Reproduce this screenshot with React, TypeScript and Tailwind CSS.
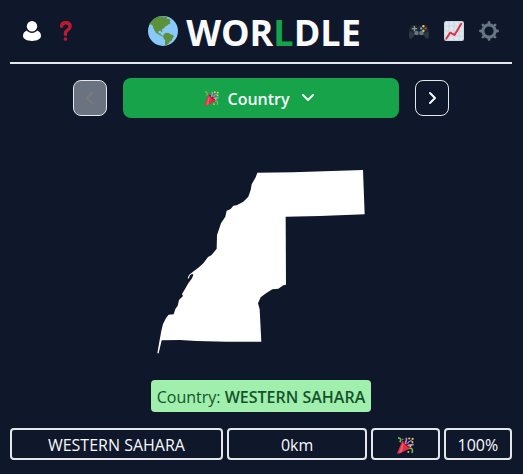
import type { ReactNode } from "react";

function Globe() {
  return (
    <svg viewBox="0 0 36 36" className="size-[30px]" aria-hidden="true">
      <circle cx="18" cy="18" r="18" fill="#88C9F9" />
      <path
        fill="#5C913B"
        d="M3.400 7.600C6 3.600 10 1 14.500 .4l5 .1 3.500 1-.6 1.700 3.200 .2 1.600 2.200-1.200 1.700 1 2.200-2.600 .4-1.200 1.600-2.200 .8-1.400 2.200-2.400 1-.4 2 .6 1.600-1.200 .2-1.200-1.700-2.200 .4-.6 1.700 1 1.400 1.600-.4 .4 1.600 1.600 .8 1.200 1.200-.8 .4-2.200-1.200-2.600-1.500-2.700-1.600-1.600-2.600-1.800-3.200-.4-2.600-2-1.800-3-.3z"
      />
      <path
        fill="#5C913B"
        d="M19.400 21.600l2.200-1.600 3.200 .4 2.400 1.600 3.200 1.200 .6 1.800-1.800 2-.6 2.400-2.200 1.200-1.600 2.400-1.600 1-.8 1.800-1.500 .2-.5-2.800 .2-4-2-2.600-.6-2.400z"
      />
    </svg>
  );
}

function Person() {
  return (
    <svg viewBox="0 0 20 20" className="size-5" fill="#fff" aria-hidden="true">
      <circle cx="10" cy="5.300" r="5.200" />
      <path d="M4.800 9.600C2.500 10.600 1 12.500 1 14.800 1 18 5 20 10 20s9-2 9-5.200c0-2.300-1.500-4.200-3.800-5.200C14 11 12.100 11.900 10 11.900S6 11 4.800 9.600z" />
    </svg>
  );
}

function Question() {
  return (
    <svg viewBox="0 0 36 36" className="size-5" aria-hidden="true">
      <circle cx="17" cy="32.500" r="3.300" fill="#BE1931" />
      <path
        d="M10 9.500C10.300 5.500 13 3.200 17.500 3.200c5 0 8 2.900 8 6.900 0 6.400-8.500 5.400-8.500 12.100v2"
        fill="none"
        stroke="#BE1931"
        strokeWidth="6"
        strokeLinecap="round"
      />
    </svg>
  );
}

function Gamepad() {
  return (
    <svg viewBox="0 0 36 36" className="size-5" aria-hidden="true">
      <path
        fill="#31373D"
        d="M0 26C0 18 2 9 6 7.500c2.500-.8 6-.5 8 1h8c2-1.500 5.500-1.800 8-1 4 1.500 6 10.500 6 18.500 0 4.500-1 6-3 6-3 0-4.500-4-7-7H10c-2.500 3-4 7-7 7-2 0-3-1.500-3-6z"
      />
      <path fill="#212629" d="M6 7.500c2.500-.8 6-.5 8 1h8c2-1.500 5.500-1.800 8-1 3 1.200 4.500 6 5.500 11l-9 3.500h-17l-9-3.500C1.500 13.500 3 8.700 6 7.500z" />
      <circle cx="13.500" cy="21.500" r="4" fill="#66757F" />
      <circle cx="22.500" cy="21.500" r="4" fill="#66757F" />
      <path fill="#8899A6" d="M8.500 9h2.500v3.500h3.500v2.500h-3.500v3.500h-2.500v-3.500h-3.500v-2.500h3.500z" />
      <circle cx="26" cy="9.500" r="2.100" fill="#FFCC4D" />
      <circle cx="26" cy="17.500" r="2.100" fill="#A6D388" />
      <circle cx="22" cy="13.500" r="2.100" fill="#55ACEE" />
      <circle cx="30" cy="13.500" r="2.100" fill="#DD2E44" />
    </svg>
  );
}

function Chart() {
  return (
    <svg viewBox="0 0 36 36" className="size-5" aria-hidden="true">
      <rect width="36" height="36" rx="4" fill="#CCD6DD" />
      <rect x="2" y="2" width="32" height="32" rx="2" fill="#E1E8ED" />
      <path d="M9 2v32M18 2v32M27 2v32M2 9h32M2 18h32M2 27h32" stroke="#CCD6DD" strokeWidth="2" />
      <path
        d="M4 32l7-11 8 4L31 5"
        fill="none"
        stroke="#DD2E44"
        strokeWidth="3.500"
        strokeLinecap="round"
        strokeLinejoin="round"
      />
    </svg>
  );
}

function Gear() {
  return (
    <svg viewBox="0 0 36 36" className="size-5" aria-hidden="true">
      <g stroke="#66757F" strokeWidth="5" strokeLinecap="round">
        <path d="M18 2.500v31M2.500 18h31M7 7l22 22M29 7L7 29" />
      </g>
      <circle cx="18" cy="18" r="11" fill="#0f172a" stroke="#66757F" strokeWidth="5.500" />
    </svg>
  );
}

function Party({ className }: { className: string }) {
  return (
    <svg viewBox="0 0 36 36" className={className} aria-hidden="true">
      <path fill="#DD2E44" d="M11.600 7.600L.4 33.500c-.5 1.400 .6 2.400 2.100 2L28.600 24.500C25 20 17 11 11.600 7.600z" />
      <path fill="#EA596E" d="M11.600 12L4 34.800l7-3L14 16z" />
      <ellipse cx="20" cy="16" rx="2" ry="10.500" transform="rotate(-45 20 16)" fill="#A0041E" />
      <path d="M18.500 14.500c-1-6 3-6 1-13M23 19c4-5 9 0 12-4" fill="none" stroke="#AA8DD8" strokeWidth="3.500" />
      <path d="M2 2c7 0 7 5 4 9M26 24c6-1 8 2 6 10" fill="none" stroke="#77B255" strokeWidth="3.500" />
      <path d="M22 14c2-4 4-5 9-7" fill="none" stroke="#AA8DD8" strokeWidth="2.500" />
      <g fill="#FFCC4D">
        <circle cx="26" cy="3" r="2.200" />
        <circle cx="33" cy="4" r="2.200" />
        <circle cx="32.500" cy="10.500" r="2.200" />
        <circle cx="28.500" cy="19.500" r="2" />
        <circle cx="24" cy="31.500" r="2" />
      </g>
      <circle cx="12" cy="5" r="2" fill="#5C913B" />
    </svg>
  );
}

function Chevron({ d, className }: { d: string; className: string }) {
  return (
    <svg viewBox="0 0 20 20" className={className} fill="none" stroke="currentColor" strokeWidth="2" strokeLinecap="round" strokeLinejoin="round" aria-hidden="true">
      <path d={d} />
    </svg>
  );
}

function IconButton({ label, children }: { label: string; children: ReactNode }) {
  return (
    <button type="button" aria-label={label}>
      {children}
    </button>
  );
}

function CountryShape() {
  return (
    <svg viewBox="51 0 624 600" className="h-[200px] w-[208px]" role="img" aria-label="Country to guess">
      <path
        fill="#fff"
        d="M52 580L58 545 64 512 69 492 78 474 86 464 101 463 106 447 113 437 117 420 129 408 126 402 132 392 145 370 155 356 160 346 157 341 150 346 146 356 143 355 147 345 158 336 175 323 190 310 204 291 214 286 224 274 230 266 231 225 243 190 256 170 260 152 272 147 280 137 290 136 310 125 325 110 332 90 335 73 347 52 352 38 460 37 669 30 674 163 540 168 437 170 438 374 430 376 415 386 397 388 378 400 362 412 354 430 359 448 364 545H260L170 543 120 540 65 541 56 580z"
      />
    </svg>
  );
}

const cell = "flex h-8 items-center justify-center rounded border-2 border-gray-200 pt-0.5";

export default function App() {
  return (
    <div className="min-h-screen bg-slate-900 pr-[11px] pl-2.5 font-['Open_Sans','Noto_Sans',sans-serif] text-base text-slate-50">
      <header className="flex h-16 items-center justify-between border-b-2 border-gray-200 pr-[13px] pl-3">
        <div className="mr-6 flex gap-3.5">
          <IconButton label="Account"><Person /></IconButton>
          <IconButton label="How to play"><Question /></IconButton>
        </div>
        <h1 className="flex flex-1 items-center justify-center gap-2 text-4xl font-bold">
          <Globe />
          <span className="pt-1">WOR<span className="text-[#16a34a]">L</span>DLE</span>
        </h1>
        <div className="flex justify-end gap-[15px]">
          <IconButton label="Other games"><Gamepad /></IconButton>
          <IconButton label="Statistics"><Chart /></IconButton>
          <IconButton label="Settings"><Gear /></IconButton>
        </div>
      </header>
      <main className="flex flex-col items-center">
        <nav className="mt-3.5 flex items-center justify-center gap-4">
          <button type="button" disabled aria-label="Previous round" className="flex h-9 w-[34px] items-center justify-center rounded-lg border border-gray-200 bg-[#6b7280] text-[#7b7b7b]">
            <Chevron d="M12 5L7 10l5 5" className="size-5" />
          </button>
          <button type="button" aria-haspopup="listbox" className="flex h-10 w-[276px] items-center justify-center gap-2 rounded-lg bg-[#16a34a] font-semibold">
            <Party className="size-[15px]" />
            <span className="pt-0.5">Country</span>
            <Chevron d="M5 7l5 5 5-5" className="size-5" />
          </button>
          <button type="button" aria-label="Next round" className="flex h-9 w-[34px] items-center justify-center rounded-lg border border-gray-200">
            <Chevron d="M8 5l5 5-5 5" className="size-5" />
          </button>
        </nav>
        <div className="mt-[42px]">
          <CountryShape />
        </div>
        <p className="mt-5 flex h-8 items-center rounded bg-[#a0efac] px-1.5 pt-0.5 text-[#14532d]">
          <span>Country: <b className="font-semibold">WESTERN SAHARA</b></span>
        </p>
        <div className="mt-4 grid w-full grid-cols-7 gap-1">
          <div className={`col-span-3 ${cell}`}>WESTERN SAHARA</div>
          <div className={`col-span-2 ${cell}`}>0km</div>
          <div className={cell}><Party className="size-[17px]" /></div>
          <div className={cell}>100%</div>
        </div>
      </main>
    </div>
  );
}
